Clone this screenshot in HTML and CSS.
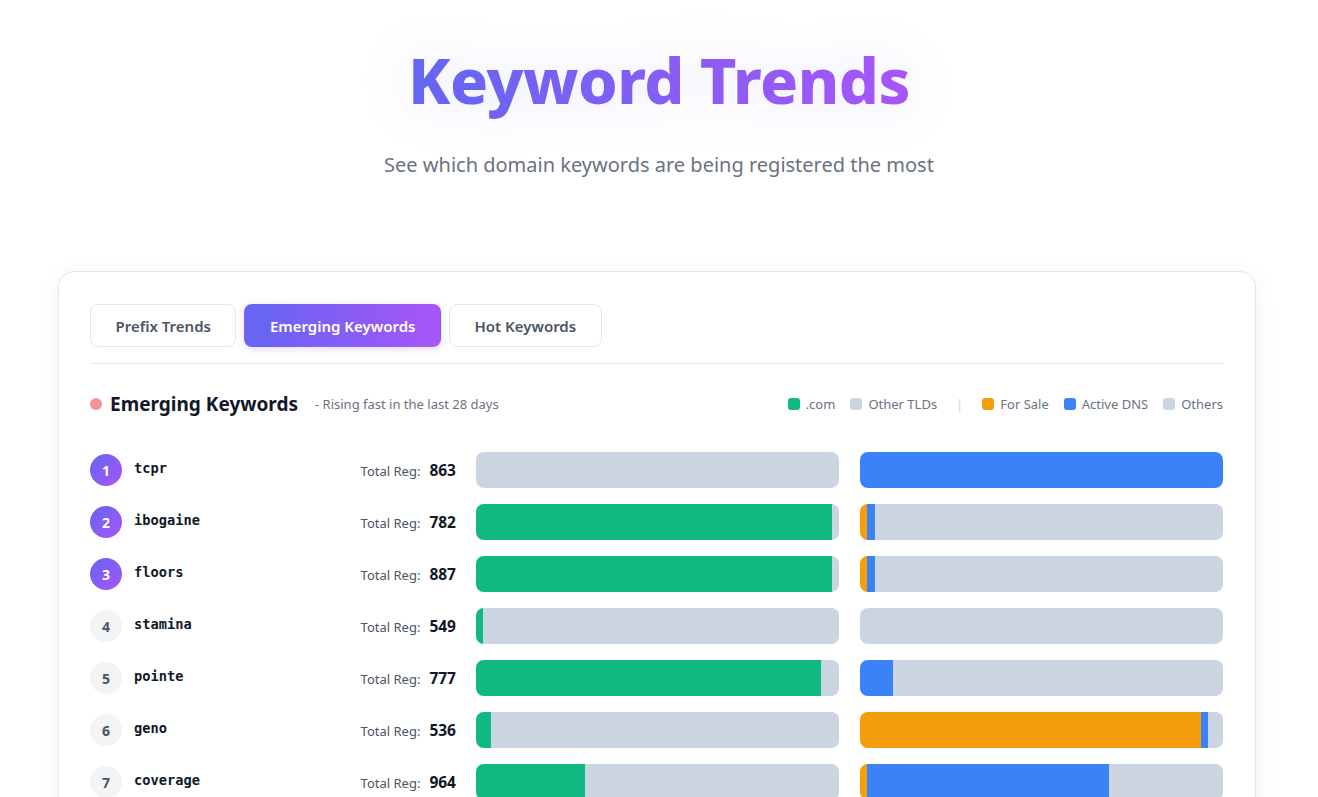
FILE: index.html
```html
<!DOCTYPE html>
<html lang="en">
<head>
<meta charset="utf-8">
<title>Keyword Trends</title>
<link rel="stylesheet" href="styles.css">
</head>
<body>
<header class="hero">
  <h1 class="hero-title">Keyword Trends</h1>
  <p class="hero-sub">See which domain keywords are being registered the most</p>
</header>

<main class="card">
  <nav class="tabs">
    <button class="tab">Prefix Trends</button>
    <button class="tab active">Emerging Keywords</button>
    <button class="tab">Hot Keywords</button>
  </nav>

  <div class="section-head">
    <div class="section-title">
      <span class="dot"></span>
      <h2>Emerging Keywords</h2>
      <span class="section-desc">- Rising fast in the last 28 days</span>
    </div>
    <div class="legend">
      <span class="lg"><i class="sw com"></i>.com</span>
      <span class="lg"><i class="sw other"></i>Other TLDs</span>
      <span class="lg-sep">|</span>
      <span class="lg"><i class="sw sale"></i>For Sale</span>
      <span class="lg"><i class="sw dns"></i>Active DNS</span>
      <span class="lg"><i class="sw other"></i>Others</span>
    </div>
  </div>

  <ul class="rows">
    <li class="row">
      <span class="rank top">1</span><span class="kw">tcpr</span>
      <span class="total">Total Reg:<b>863</b></span>
      <div class="bar"><span class="seg other" style="width:100%"></span></div>
      <div class="bar"><span class="seg dns" style="width:100%"></span></div>
    </li>
    <li class="row">
      <span class="rank top">2</span><span class="kw">ibogaine</span>
      <span class="total">Total Reg:<b>782</b></span>
      <div class="bar"><span class="seg com" style="width:98%"></span><span class="seg other" style="width:2%"></span></div>
      <div class="bar"><span class="seg sale" style="width:2%"></span><span class="seg dns" style="width:2%"></span><span class="seg other" style="width:96%"></span></div>
    </li>
    <li class="row">
      <span class="rank top">3</span><span class="kw">floors</span>
      <span class="total">Total Reg:<b>887</b></span>
      <div class="bar"><span class="seg com" style="width:98%"></span><span class="seg other" style="width:2%"></span></div>
      <div class="bar"><span class="seg sale" style="width:2%"></span><span class="seg dns" style="width:2%"></span><span class="seg other" style="width:96%"></span></div>
    </li>
    <li class="row">
      <span class="rank">4</span><span class="kw">stamina</span>
      <span class="total">Total Reg:<b>549</b></span>
      <div class="bar"><span class="seg com" style="width:2%"></span><span class="seg other" style="width:98%"></span></div>
      <div class="bar"><span class="seg other" style="width:100%"></span></div>
    </li>
    <li class="row">
      <span class="rank">5</span><span class="kw">pointe</span>
      <span class="total">Total Reg:<b>777</b></span>
      <div class="bar"><span class="seg com" style="width:95%"></span><span class="seg other" style="width:5%"></span></div>
      <div class="bar"><span class="seg dns" style="width:9%"></span><span class="seg other" style="width:91%"></span></div>
    </li>
    <li class="row">
      <span class="rank">6</span><span class="kw">geno</span>
      <span class="total">Total Reg:<b>536</b></span>
      <div class="bar"><span class="seg com" style="width:4%"></span><span class="seg other" style="width:96%"></span></div>
      <div class="bar"><span class="seg sale" style="width:94%"></span><span class="seg dns" style="width:2%"></span><span class="seg other" style="width:4%"></span></div>
    </li>
    <li class="row">
      <span class="rank">7</span><span class="kw">coverage</span>
      <span class="total">Total Reg:<b>964</b></span>
      <div class="bar"><span class="seg com" style="width:30%"></span><span class="seg other" style="width:70%"></span></div>
      <div class="bar"><span class="seg sale" style="width:2%"></span><span class="seg dns" style="width:66.7%"></span><span class="seg other" style="width:31.3%"></span></div>
    </li>
  </ul>
</main>
</body>
</html>
```

FILE: styles.css
```css
* { box-sizing: border-box; }

html, body {
  margin: 0;
  padding: 0;
  background: #ffffff;
}

body {
  font-family: "Noto Sans", "Open Sans", "Liberation Sans", sans-serif;
  color: #111827;
}

.hero {
  text-align: center;
  padding-top: 36px;
  height: 271px;
}

.hero-title {
  display: inline-block;
  margin: 0;
  font-size: 63px;
  font-weight: 800;
  line-height: 88px;
  letter-spacing: -0.5px;
  background: linear-gradient(90deg, #6366f1 0%, #a855f7 100%);
  -webkit-background-clip: text;
  background-clip: text;
  color: transparent;
  filter: drop-shadow(0 0 24px rgba(99, 102, 241, 0.18));
}

.hero-sub {
  margin: 27px 0 0;
  font-size: 20px;
  color: #6b7280;
}

.card {
  width: 1198px;
  margin-left: calc(50% - 601px);
  border: 1px solid #e5e7eb;
  border-radius: 16px;
  padding: 32px 32px 40px 31px;
  box-shadow: 0 4px 24px rgba(15, 23, 42, 0.06);
  background: #fff;
}

.tabs {
  display: flex;
  gap: 8px;
  padding-bottom: 16px;
  border-bottom: 1px solid #e5e7eb;
}

.tab {
  height: 43px;
  padding: 0 24.5px;
  border: 1px solid #e5e7eb;
  border-radius: 8px;
  background: #fff;
  color: #4b5563;
  font-family: "Noto Sans", "Open Sans", sans-serif;
  font-size: 15px;
  font-weight: 600;
  cursor: pointer;
}

.tab.active {
  border-color: transparent;
  background: linear-gradient(90deg, #6366f1 0%, #a855f7 100%);
  color: #fff;
  box-shadow: 0 2px 8px rgba(124, 58, 237, 0.2);
}

.section-head {
  display: flex;
  align-items: center;
  justify-content: space-between;
  margin-top: 28px;
  height: 24px;
}

.section-title {
  display: flex;
  align-items: center;
}

.dot {
  width: 12px;
  height: 12px;
  border-radius: 50%;
  background: #f59393;
  margin-right: 8px;
}

.section-title h2 {
  margin: 0;
  font-size: 19px;
  font-weight: 700;
  color: #111827;
}

.section-desc {
  margin-left: 17px;
  font-size: 13px;
  color: #6b7280;
}

.legend {
  display: flex;
  align-items: center;
  gap: 15px;
  font-size: 13px;
  color: #6b7280;
}

.lg {
  display: flex;
  align-items: center;
  gap: 6px;
}

.lg-sep {
  color: #cbd5e1;
  margin: 0 4px;
}

.sw {
  display: inline-block;
  width: 12px;
  height: 12px;
  border-radius: 3px;
}

.com { background: #10b981; }
.other { background: #cbd5e1; }
.sale { background: #f59e0b; }
.dns { background: #3b82f6; }

.rows {
  list-style: none;
  margin: 36px 0 0;
  padding: 0;
  display: flex;
  flex-direction: column;
  gap: 16px;
}

.row {
  display: flex;
  align-items: center;
  height: 36px;
}

.rank {
  flex: none;
  width: 32px;
  height: 32px;
  border-radius: 50%;
  background: #f3f4f6;
  color: #4b5563;
  display: flex;
  align-items: center;
  justify-content: center;
  font-size: 14px;
  font-weight: 700;
}

.rank.top {
  background: linear-gradient(135deg, #6366f1 0%, #a855f7 100%);
  color: #fff;
}

.kw {
  flex: 1;
  margin-left: 12px;
  margin-top: -4px;
  font-family: "DejaVu Sans Mono", "Liberation Mono", monospace;
  font-size: 13.7px;
  font-weight: 700;
  color: #111827;
}

.total {
  display: flex;
  align-items: baseline;
  gap: 9px;
  font-size: 13px;
  color: #4b5563;
  margin-right: 20px;
}

.total b {
  font-size: 15.5px;
  font-weight: 700;
  color: #111827;
}

.bar {
  flex: none;
  width: 363px;
  height: 36px;
  border-radius: 8px;
  overflow: hidden;
  display: flex;
  background: #cbd5e1;
  margin-left: 21px;
}

.total + .bar { margin-left: 0; }

.seg {
  height: 100%;
  display: block;
}
```
